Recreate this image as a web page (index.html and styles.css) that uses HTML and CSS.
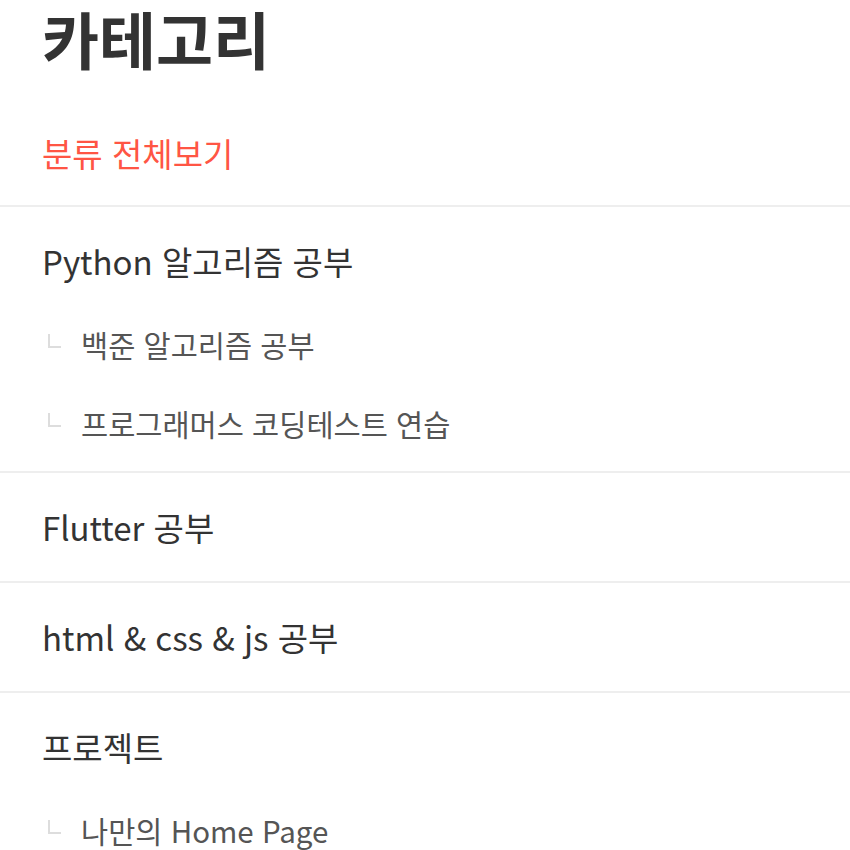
FILE: index.html
```html
<!DOCTYPE html>
<html lang="ko">
<head>
<meta charset="UTF-8">
<meta name="viewport" content="width=device-width,initial-scale=1">
<title>카테고리</title>
<link rel="stylesheet" href="styles.css">
</head>
<body>
<div class="category">
  <h2 class="title">카테고리</h2>
  <a class="all" href="#">분류 전체보기</a>
  <ul class="cat-list">
    <li class="cat">
      <a class="cat-link" href="#">Python 알고리즘 공부</a>
      <ul class="sub-list">
        <li><a class="sub-link" href="#">백준 알고리즘 공부</a></li>
        <li><a class="sub-link" href="#">프로그래머스 코딩테스트 연습</a></li>
      </ul>
    </li>
    <li class="cat"><a class="cat-link" href="#">Flutter 공부</a></li>
    <li class="cat"><a class="cat-link" href="#">html &amp; css &amp; js 공부</a></li>
    <li class="cat">
      <a class="cat-link" href="#">프로젝트</a>
      <ul class="sub-list">
        <li><a class="sub-link" href="#">나만의 Home Page</a></li>
      </ul>
    </li>
  </ul>
</div>
</body>
</html>
```

FILE: styles.css
```css
body {
  margin: 0;
  background: #fff;
  font-family: "Noto Sans CJK KR", "Noto Sans", sans-serif;
  color: #333;
}

a {
  text-decoration: none;
  color: inherit;
}

ul {
  list-style: none;
  margin: 0;
  padding: 0;
}

.title {
  margin: 0;
  padding: 0 42px;
  font-size: 62px;
  font-weight: 700;
  line-height: 76px;
  color: #333;
}

.all {
  display: block;
  padding: 52px 42px 27px;
  font-size: 33px;
  line-height: 50px;
  color: #ff5544;
}

/* top level categories */
.cat {
  border-top: 2px solid #eee;
}
.cat-link {
  display: block;
  padding: 0 42px;
  font-size: 33px;
  line-height: 108px;
  color: #333;
}

/* sub categories */
.sub-list {
  margin-top: -10px;
  padding-bottom: 8px;
}
.sub-link {
  display: flex;
  align-items: center;
  padding-left: 48px;
  font-size: 29.5px;
  line-height: 79px;
  color: #555;
}
.sub-link::before {
  content: "";
  width: 11px;
  height: 12px;
  margin: 0 20px 8px 0;
  border-left: 2px solid #ddd;
  border-bottom: 2px solid #ddd;
}
```
